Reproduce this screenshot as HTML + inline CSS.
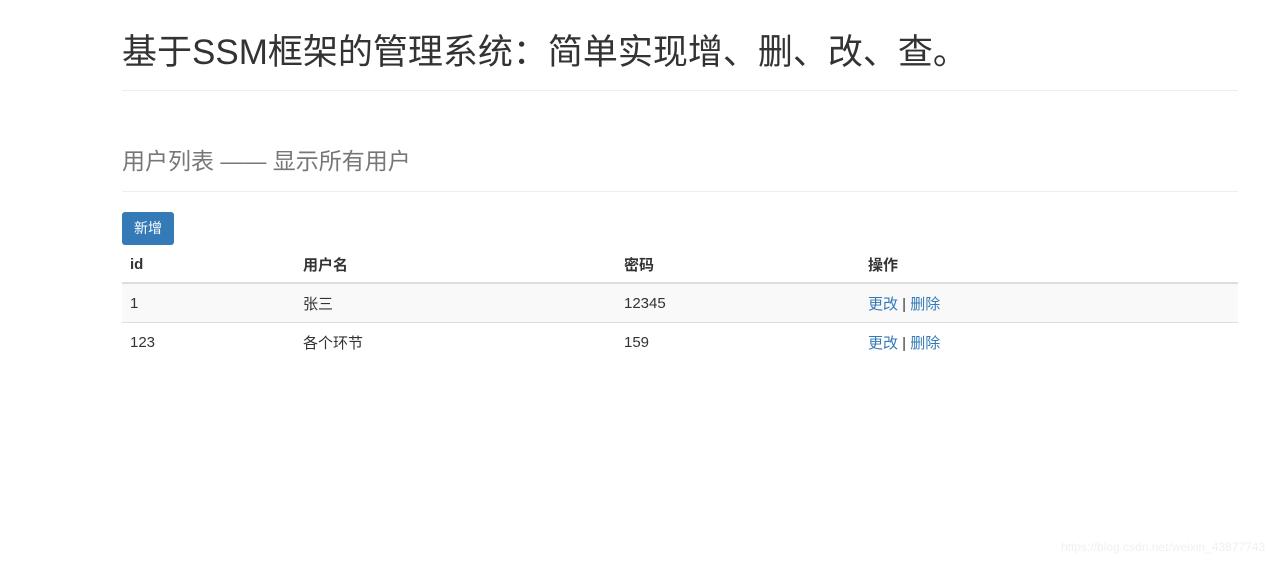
<!DOCTYPE html>
<html><head><meta charset="utf-8"><style>
body{margin:0;width:1280px;height:563px;background:#fff;font-family:"Liberation Sans","Noto Sans CJK SC",sans-serif;color:#333;font-size:14px;position:relative;overflow:hidden}
h1{position:absolute;left:122px;top:31px;margin:0;font-size:35px;font-weight:400;line-height:44px;color:#333}
.hr{position:absolute;left:122px;width:1116px;height:1px;background:#eee}
h3{position:absolute;left:122px;top:147px;margin:0;font-size:23px;font-weight:400;color:#777;line-height:28px}
.btn{position:absolute;left:122px;top:212px;width:52px;height:33px;background:#337ab7;border-radius:3px;color:#fff;font-size:14px;line-height:33px;text-align:center}
table{position:absolute;left:122px;top:246px;width:1116px;border-collapse:collapse}
td,th{text-align:left;padding:0 8px;height:38px;font-size:15px}
th{border-bottom:2px solid #ddd;font-weight:700;height:36px}
tr.s td{background:#f9f9f9;border-bottom:1px solid #ddd}
a{color:#337ab7;text-decoration:none}
.wm{position:absolute;left:1061px;top:540px;font-size:12px;color:#f0f0f0}
</style></head><body>
<h1>基于SSM框架的管理系统：简单实现增、删、改、查。</h1>
<div class="hr" style="top:90px"></div>
<h3>用户列表 —— 显示所有用户</h3>
<div class="hr" style="top:191px"></div>
<div class="btn">新增</div>
<table>
<tr><th style="width:157px">id</th><th style="width:305px">用户名</th><th style="width:228px">密码</th><th>操作</th></tr>
<tr class="s"><td>1</td><td>张三</td><td>12345</td><td><a>更改</a> | <a>删除</a></td></tr>
<tr><td>123</td><td>各个环节</td><td>159</td><td><a>更改</a> | <a>删除</a></td></tr>
</table>
<div class="wm">https://blog.csdn.net/weixin_43877743</div>
</body></html>
